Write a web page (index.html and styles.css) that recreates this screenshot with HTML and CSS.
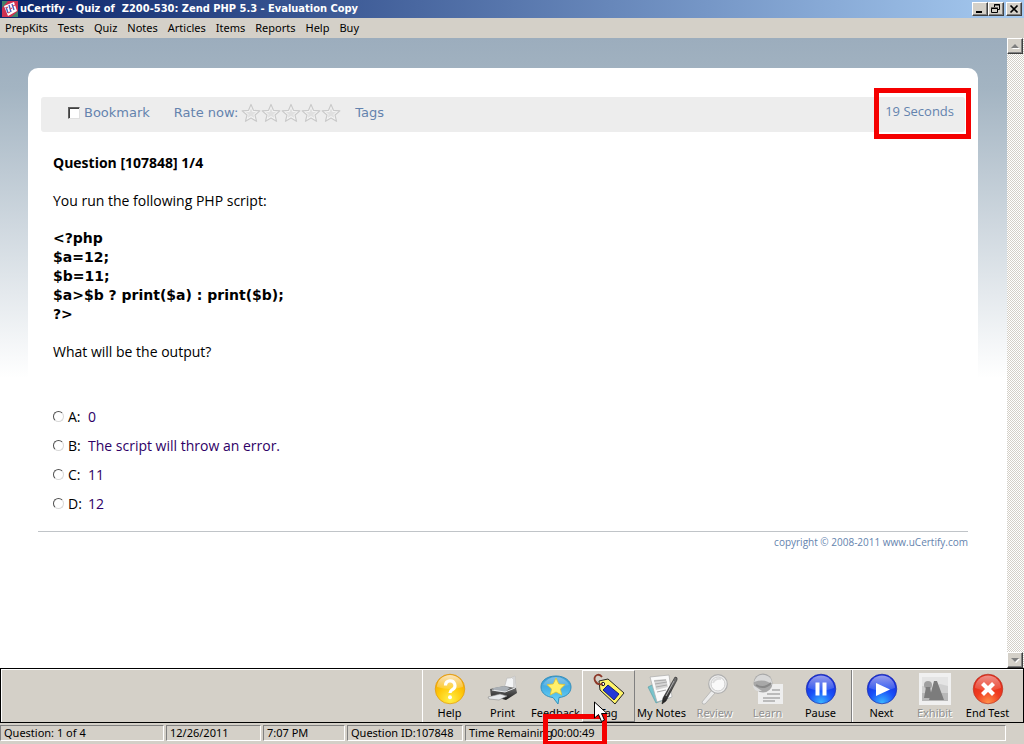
FILE: index.html
```html
<!DOCTYPE html>
<html lang="en">
<head>
<meta charset="utf-8">
<title>uCertify - Quiz of Z200-530: Zend PHP 5.3 - Evaluation Copy</title>
<link rel="stylesheet" href="styles.css">
</head>
<body>
<svg class="defs" width="0" height="0" aria-hidden="true">
  <defs>
    <symbol id="star" viewBox="0 0 18 18"><path d="M9 1.3 11.2 6.6 17 7.1 12.6 10.8 14 16.5 9 13.5 4 16.5 5.4 10.8 1 7.1 6.8 6.6Z" fill="#f4f4f4" stroke="#c9c9c9" stroke-linejoin="round"/><path d="M9 4.5 10.4 8 13.6 8.2 11.2 10.4 12 13.5 9 11.6 6 13.5 6.8 10.4 4.4 8.2 7.6 8Z" fill="#e0e0e0"/></symbol>
    <radialGradient id="yellow" cx=".5" cy=".85" r=".8"><stop offset="0" stop-color="#fff04a"/><stop offset=".55" stop-color="#ffc80a"/><stop offset="1" stop-color="#f0a000"/></radialGradient>
    <radialGradient id="blue" cx=".5" cy=".95" r=".85"><stop offset="0" stop-color="#38b4ff"/><stop offset=".5" stop-color="#1a50f8"/><stop offset="1" stop-color="#1428d8"/></radialGradient>
    <radialGradient id="red" cx=".5" cy=".95" r=".85"><stop offset="0" stop-color="#ff9048"/><stop offset=".5" stop-color="#f03c20"/><stop offset="1" stop-color="#e02818"/></radialGradient>
    <linearGradient id="sky" x2="0" y2="1"><stop offset="0" stop-color="#3a9ad4"/><stop offset=".5" stop-color="#4ab4e8"/><stop offset="1" stop-color="#74dcfa"/></linearGradient>
    <linearGradient id="gloss" x2="0" y2="1"><stop offset="0" stop-color="#fff" stop-opacity=".75"/><stop offset="1" stop-color="#fff" stop-opacity=".15"/></linearGradient>
    <linearGradient id="dark" x2="0" y2="1"><stop offset="0" stop-color="#777"/><stop offset="1" stop-color="#1c1c1c"/></linearGradient>
  </defs>
</svg>

<header class="titlebar">
  <svg class="app-icon" viewBox="0 0 16 16" aria-hidden="true"><rect width="16" height="16" fill="#d03050"/><path d="M0 0h6L0 7ZM16 16h-7l7-6Z" fill="#40806a"/><path d="M2 5 12 1l3 9-9 5Z" fill="#fff"/><path d="m4 6 2 6M7 4l2 7M10 3l2 6" stroke="#4862c0" stroke-width="1.400"/><path d="m4 7 2-1M8 8l2-1M11 5l2-1M6 12l2-1" stroke="#e04860" stroke-width="1.200"/></svg>
  <h1 class="title">uCertify - Quiz of&nbsp; Z200-530: Zend PHP 5.3 - Evaluation Copy</h1>
  <div class="window-controls">
    <button class="win-btn" aria-label="Minimize"><svg viewBox="0 0 12 10"><path d="M2 7h6v2H2z"/></svg></button>
    <button class="win-btn" aria-label="Restore"><svg viewBox="0 0 12 10"><path d="M4.500 3V.5h5v5H8M4 1h6M1.500 4.500h6v4h-6ZM1 4h7" fill="none" stroke="#000"/></svg></button>
    <button class="win-btn win-close" aria-label="Close"><svg viewBox="0 0 12 10"><path d="m2.500 1.500 7 7m0-7-7 7" stroke="#000" stroke-width="1.700"/></svg></button>
  </div>
</header>

<nav class="menubar" aria-label="Main menu">
  <button>PrepKits</button><button>Tests</button><button>Quiz</button><button>Notes</button><button>Articles</button><button>Items</button><button>Reports</button><button>Help</button><button>Buy</button>
</nav>

<div class="workspace">
  <main class="page">
    <section class="panel">
      <div class="question-bar">
        <label class="bookmark"><input class="check" type="checkbox">Bookmark</label>
        <div class="rating">
          <span class="rating-label">Rate now:</span>
          <button class="star" aria-label="1 star"><svg><use href="#star"/></svg></button><button class="star" aria-label="2 stars"><svg><use href="#star"/></svg></button><button class="star" aria-label="3 stars"><svg><use href="#star"/></svg></button><button class="star" aria-label="4 stars"><svg><use href="#star"/></svg></button><button class="star" aria-label="5 stars"><svg><use href="#star"/></svg></button>
        </div>
        <a class="tags" href="#tags">Tags</a>
        <div class="elapsed">19 Seconds<span class="mark mark-elapsed"></span></div>
      </div>
      <div class="question">
        <h2 class="heading">Question [107848] 1/4</h2>
        <p class="prompt">You run the following PHP script:</p>
        <pre class="code">&lt;?php
$a=12;
$b=11;
$a&gt;$b ? print($a) : print($b);
?&gt;</pre>
        <p class="prompt">What will be the output?</p>
        <div class="answers" role="radiogroup" aria-label="Answers">
          <label class="answer"><input class="radio" type="radio" name="answer"><span class="letter">A:</span><span class="choice">0</span></label>
          <label class="answer"><input class="radio" type="radio" name="answer"><span class="letter">B:</span><span class="choice">The script will throw an error.</span></label>
          <label class="answer"><input class="radio" type="radio" name="answer"><span class="letter">C:</span><span class="choice">11</span></label>
          <label class="answer"><input class="radio" type="radio" name="answer"><span class="letter">D:</span><span class="choice">12</span></label>
        </div>
      </div>
      <footer class="copyright">copyright © 2008-2011 www.uCertify.com</footer>
    </section>
  </main>
  <div class="scrollbar">
    <button class="scroll-btn" aria-label="Scroll up"><svg viewBox="0 0 8 5"><path d="m1 5 4-4 4 4Z" fill="#fff"/><path d="m0 4 4-4 4 4Z" fill="#808080"/></svg></button>
    <button class="scroll-btn" aria-label="Scroll down"><svg viewBox="0 0 8 5"><path d="m1 1 4 4 4-4Z" fill="#fff"/><path d="m0 0 4 4 4-4Z" fill="#808080"/></svg></button>
  </div>
</div>

<div class="toolbar">
  <div class="tool-group">
    <button class="tool"><svg viewBox="0 0 32 32"><circle cx="16" cy="16" r="14.800" fill="url(#yellow)" stroke="#e09a10" stroke-width=".7"/><path d="M3 14a13 12 0 0 1 26 0Q16 18 3 14Z" fill="url(#gloss)"/><path d="M11.500 12.500a4.700 4.700 0 1 1 6.800 4.200Q16 18 16 20" fill="none" stroke="#fff" stroke-width="3.200"/><circle cx="16" cy="24.300" r="2" fill="#fff"/></svg>Help</button>
    <button class="tool"><svg viewBox="0 0 32 32"><path d="M17 16 20 5q3 1 8-2l1 13-4 3Z" fill="#f4f5f6" stroke="#b8b8b8" stroke-width=".6"/><path d="m25 5 2 0 0 10" fill="none" stroke="#d4d4d4" stroke-width="2"/><path d="m3 16 14-3 12 2 1 5-11 7-15-4Z" fill="url(#dark)"/><path d="m6 15 11-2 6 2-5 4-11-1Z" fill="#aab0b6"/><path d="m5 17 13 2 10-4" fill="none" stroke="#e8eaec"/><path d="m1 24 12-3 7 2-8 4-10-1Z" fill="#e8eaec" stroke="#8a8a8a" stroke-width=".6"/></svg>Print</button>
    <button class="tool"><svg viewBox="0 0 32 32"><path d="M16 3C7 3 1 7.500 1 14s6 10 12 10.500L18 31l1-6.500C26 24 31 20 31 14S25 3 16 3Z" fill="url(#sky)" stroke="#3590bb"/><path d="M3 12Q7 4 16 4t13 8q-12 4-26 0Z" fill="url(#gloss)" opacity=".5"/><path d="m16 5 2.800 6 6.200.6-4.600 4.500 1.400 5.900L16 19l-5.800 3 1.400-5.900L7 11.600l6.200-.6Z" fill="#fff06a" stroke="#e8c020" stroke-width=".7"/></svg>Feedback</button>
    <button class="tool tool-hover"><svg viewBox="0 0 32 32"><path d="m6 8 9-2 16 14-9 11L7 17Z" fill="#fff46a" stroke="#222"/><path d="m15 12 11 9-5 6-11-10Z" fill="#2438d8" stroke="#152078"/><circle cx="10" cy="11" r="1.700" fill="#fff" stroke="#222"/><path d="M10 11C2 13-1 4 4 2q3-1 5 2" fill="none" stroke="#8c3828" stroke-width="1.800"/></svg>Tag</button>
    <button class="tool"><svg viewBox="0 0 32 32"><path d="m2 14 16-8 7 18-15 6Z" fill="#78c4cc" stroke="#429099" stroke-width=".5"/><path d="m4 4 19-2 3 22-15 5Z" fill="#fafafa" stroke="#aaa" stroke-width=".7"/><path d="m8 7 12-1 2 8-12 3Z" fill="#ccc" opacity=".8"/><path d="m8 8 12-1M9 11l12-2M10 14l11-2M11 19l9-2" stroke="#aaa"/><path d="M29 4q3 0 2 3L20 28l-4 3 1-6Z" fill="url(#dark)" stroke="#111" stroke-width=".5"/><path d="m28 8-8 15" stroke="#aaa"/></svg>My Notes</button>
    <button class="tool" disabled><svg viewBox="0 0 32 32"><path d="m13 17 3 3L6 31q-3 1-3-2Z" fill="#ececec" stroke="#aaa" stroke-width=".7"/><circle cx="19" cy="11" r="9.300" fill="#eee" stroke="#b0b0b0" stroke-width="1.200"/><circle cx="19" cy="11" r="7" fill="#f9f9f9" stroke="#ccc"/><path d="M14 10q2-5 8-4" stroke="#ddd" stroke-width="2" fill="none"/></svg>Review</button>
    <button class="tool" disabled><svg viewBox="0 0 32 32"><path d="M6 11h25v20H6Z" fill="#eee"/><path d="M20 17h8M15 21h13M11 25h17M11 28h12" stroke="#aaa" stroke-width="1.400"/><circle cx="11" cy="10" r="9.500" fill="#a8a8a8"/><path d="M2 9Q5 0 13 2q8 2 7 10-6-7-18-3Z" fill="#d8d8d8"/><path d="M4 12q8 5 15-2" fill="none" stroke="#888" stroke-width="2"/><path d="m1 12 9 6H5Q1 16 1 12Z" fill="#ddd"/></svg>Learn</button>
    <button class="tool"><svg viewBox="0 0 32 32"><circle cx="16" cy="16" r="14.800" fill="url(#blue)" stroke="#2030a8" stroke-width=".7"/><path d="M3 15a13 12.500 0 0 1 26 0Q16 20 3 15Z" fill="url(#gloss)" opacity=".75"/><path d="M10.500 9.500h4v13h-4zM17.500 9.500h4v13h-4z" fill="#fff"/></svg>Pause</button>
  </div>
  <div class="tool-group tool-group-end">
    <button class="tool"><svg viewBox="0 0 32 32"><circle cx="16" cy="16" r="14.800" fill="url(#blue)" stroke="#2030a8" stroke-width=".7"/><path d="M3 15a13 12.500 0 0 1 26 0Q16 20 3 15Z" fill="url(#gloss)" opacity=".75"/><path d="m10 10 14 6.500L10 23Z" fill="#fff"/></svg>Next</button>
    <button class="tool" disabled><svg viewBox="0 0 32 32"><path d="M0 0h32v32H0z" fill="#f0f0f0"/><path d="M3 4h26v24H3z" fill="#d0d0d0"/><path d="M3 4h26v9l-8-2-8 3-10-1Z" fill="#e4e4e4"/><path d="M3 20h26v8H3z" fill="#b8b8b8"/><circle cx="9" cy="12" r="4" fill="#a0a0a0"/><path d="M7 14h4l2 11H5ZM15 8h3l7 19H10Z" fill="#7c7c7c"/></svg>Exhibit</button>
    <button class="tool"><svg viewBox="0 0 32 32"><circle cx="16" cy="16" r="14.800" fill="url(#red)" stroke="#b83828" stroke-width=".7"/><path d="M3 15a13 12.500 0 0 1 26 0Q16 20 3 15Z" fill="url(#gloss)" opacity=".65"/><path d="m10.500 10.500 11 11m0-11-11 11" stroke="#fff" stroke-width="4.200"/></svg>End Test</button>
  </div>
</div>

<footer class="statusbar">
  <div class="cell cell-question">Question: 1 of 4</div>
  <div class="cell cell-date">12/26/2011</div>
  <div class="cell cell-time">7:07 PM</div>
  <div class="cell cell-id">Question ID:107848</div>
  <div class="cell cell-remaining">
    <span class="remaining-label">Time Remaining</span>
    <span class="remaining">00:00:49<span class="mark mark-remaining"></span><svg class="cursor" viewBox="0 0 14 22" aria-hidden="true"><path d="M1.500 1v16l4-3.500 3 7 3-1.300-3-6.700H14Z" fill="#fff" stroke="#000"/></svg></span>
  </div>
</footer>
</body>
</html>
```
FILE: styles.css
```css
* { box-sizing: border-box; }

:root {
  --face: #d4d0c8;
  --shade: #808080;
  --ink-blue: #6483ae;
  --ui: "DejaVu Sans Condensed", sans-serif;
  --text: "Open Sans", "Noto Sans", sans-serif;
}

body {
  margin: 0;
  height: 100vh;
  display: flex;
  flex-direction: column;
  background: #fff;
  color: #000;
  font: 11px/14px "Noto Sans", sans-serif;
}

button {
  margin: 0;
  padding: 0;
  border: 0;
  background: none;
  color: inherit;
  font: inherit;
}

.defs { position: absolute; }

.titlebar {
  height: 18px;
  flex: none;
  display: flex;
  align-items: center;
  gap: 2px;
  padding: 0 2px;
  background: linear-gradient(90deg, #0a246a, #a6caf0);
}
.app-icon { width: 16px; height: 16px; }
.title {
  flex: 1;
  margin: 0;
  color: #fff;
  font: bold 11px/16px var(--ui);
  white-space: nowrap;
}
.window-controls { display: flex; }
.win-btn {
  width: 16px;
  height: 14px;
  display: flex;
  align-items: center;
  justify-content: center;
  background: var(--face);
  border: 1px solid;
  border-color: #fff #404040 #404040 #fff;
  box-shadow: inset -1px -1px var(--shade);
}
.win-btn svg { width: 12px; height: 10px; }
.win-close { margin-left: 2px; }

.menubar {
  height: 20px;
  flex: none;
  display: flex;
  align-items: center;
  gap: 10px;
  padding: 0 5px;
  background: var(--face);
}

.workspace {
  flex: 1;
  min-height: 0;
  display: flex;
}
.page {
  flex: 1;
  padding: 30px 29px 0 28px;
  background: linear-gradient(#9cadbd, #a3b4c2 50px, #fff 340px);
  overflow: hidden;
}
.panel {
  height: 100%;
  padding: 29px 10px 0;
  background: #fff;
  border-radius: 10px 10px 0 0;
}

.question-bar {
  height: 35px;
  display: flex;
  align-items: center;
  margin: 0 3px;
  padding: 0 11px 4px 27px;
  background: #ededed;
  border-radius: 3px;
  color: var(--ink-blue);
  font: 13px/18px "DejaVu Sans", sans-serif;
}
.bookmark {
  display: flex;
  align-items: center;
  gap: 4px;
}
.check {
  appearance: none;
  width: 12px;
  height: 12px;
  margin: 0;
  background: #fff;
  border: 1px solid;
  border-color: #606060 #e0e0e0 #e0e0e0 #606060;
  box-shadow: inset 1px 1px #404040;
}
.rating {
  display: flex;
  align-items: center;
  margin-left: 24px;
}
.rating-label { margin-right: 3px; }
.star { width: 20px; height: 20px; }
.star svg { display: block; width: 20px; height: 20px; }
.tags {
  margin-left: 14px;
  color: inherit;
  text-decoration: none;
}
.elapsed {
  position: relative;
  margin: 0 0 4px auto;
  font: 13px/18px var(--text);
}

.mark {
  position: absolute;
  border: 5px solid #f50000;
}
.mark-elapsed { inset: -14px -17px -19px -11px; }
.mark-remaining { inset: -12px -12px -6px -8px; }

.question {
  padding: 21px 15px 0;
  font: 14px/19px var(--text);
}
.heading {
  margin: 0 0 19px;
  font: bold 14px/19px var(--text);
}
.prompt { margin: 0; }
.code {
  margin: 19px 0 18px;
  font: bold 14px/19px "DejaVu Sans", sans-serif;
}
.answers {
  display: flex;
  flex-direction: column;
  gap: 10px;
  margin-top: 46px;
}
.answer { display: flex; align-items: center; }
.radio {
  appearance: none;
  width: 11px;
  height: 11px;
  margin: 0 4px 0 0;
  background: #fff;
  border: 1px solid;
  border-color: #505050 #d8d8d8 #d8d8d8 #505050;
  border-radius: 50%;
}
.letter { width: 20px; }
.choice { color: #2e0066; }

.copyright {
  margin-top: 18px;
  padding-top: 3px;
  border-top: 1px solid #c0c4c8;
  color: var(--ink-blue);
  font: 10px/14px var(--text);
  text-align: right;
}

.scrollbar {
  width: 17px;
  flex: none;
  display: flex;
  flex-direction: column;
  justify-content: space-between;
  padding-right: 1px;
  background: repeating-conic-gradient(#d4d0c8 0 25%, #fff 0 50%) 0 0 / 2px 2px;
}
.scroll-btn {
  height: 16px;
  display: flex;
  align-items: center;
  justify-content: center;
  background: var(--face);
  border: 1px solid;
  border-color: #fff #404040 #404040 #fff;
  box-shadow: inset -1px -1px var(--shade);
}
.scroll-btn svg { width: 8px; height: 5px; overflow: visible; }

.toolbar {
  height: 55px;
  flex: none;
  display: flex;
  justify-content: flex-end;
  padding-right: 9px;
  background: var(--face);
  border: 1px solid #000;
  box-shadow: inset 1px 1px #fff;
}
.tool-group {
  display: flex;
  margin-top: 1px;
  border-left: 1px solid #fff;
}
.tool-group-end {
  margin-left: 4px;
  padding-left: 3px;
  border-left: 1px solid var(--shade);
  box-shadow: inset 1px 0 #fff;
}
.tool {
  width: 53px;
  display: flex;
  flex-direction: column;
  align-items: center;
  padding-top: 3px;
  line-height: 14px;
  white-space: nowrap;
}
.tool svg { width: 32px; height: 32px; flex: none; margin-bottom: 1px; }
.tool:disabled { color: #909090; text-shadow: 1px 1px #fff; }
.tool-hover {
  border: 1px solid;
  border-color: #fff var(--shade) var(--shade) #fff;
  padding-top: 2px;
}

.statusbar {
  height: 21px;
  flex: none;
  display: flex;
  gap: 2px;
  padding: 2px 18px 3px 0;
  background: var(--face);
}
.cell {
  padding-left: 3px;
  border: 1px solid;
  border-color: var(--shade) #fff #fff var(--shade);
  white-space: nowrap;
}
.cell-question { width: 164px; }
.cell-date { width: 95px; }
.cell-time { width: 82px; }
.cell-id { width: 116px; }
.cell-remaining { flex: 1; display: flex; }
.remaining-label { width: 82px; }
.remaining { position: relative; }
.cursor {
  position: absolute;
  left: 42px;
  top: -25px;
  width: 14px;
  height: 22px;
}
```
